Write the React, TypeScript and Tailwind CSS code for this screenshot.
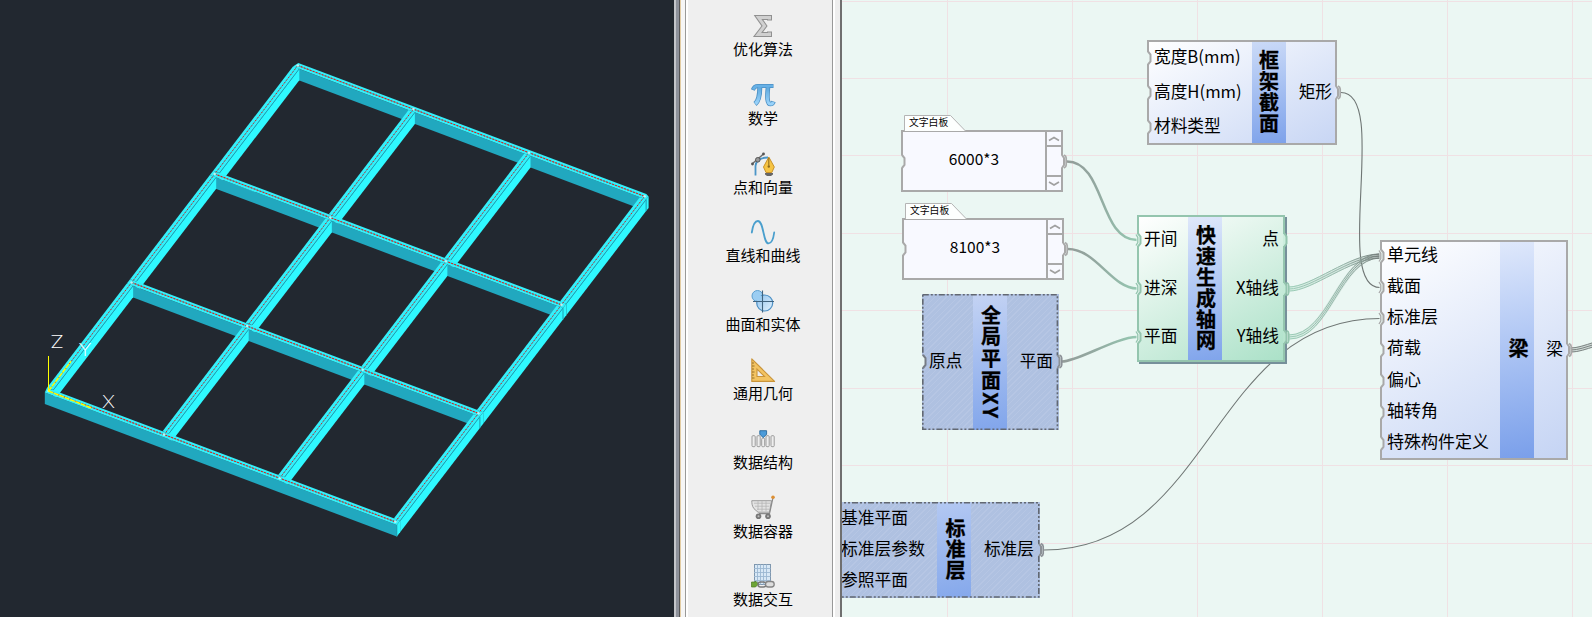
import React from "react";

type Pt = [number, number];

/* ---------- 3D viewport ---------- */

const node = (i: number, j: number, dy = 0): Pt => [
  48.5 + i * 115.6 + j * 83.1,
  391 - j * 108.5 + i * 43.6 + dy,
];
const poly = (pts: Pt[]) => pts.map((p) => p.map((n) => n.toFixed(1)).join(",")).join(" ");
const A = 0.027;
const B = 0.02;
const D = 11.5;

function Viewport() {
  const shapes: React.ReactNode[] = [];
  for (let j = 3; j >= 0; j--) {
    const l = -0.018;
    const r = 3 + A;
    const back = j === 3 ? 3 + B / 2 : j + B;
    const topLeft = j === 0 ? l : -A;
    shapes.push(
      <g key={"i" + j}>
        <polygon fill="#21a8bf" points={poly([node(l, j - B), node(r, j - B), node(r, j - B, D), node(l, j - B, D)])} />
        <polygon fill="#35f0fa" points={poly([node(j === 3 ? -0.01 : -A, j + B), node(3, j + B), node(r, back), node(r, j - B), node(topLeft, j - B)])} />
      </g>
    );
    for (let i = 0; i < 4; i++) {
      const lo = j - 1 + B;
      if (j > 0) {
        shapes.push(
          <g key={"j" + i + j}>
            <polygon fill="#2ff8ff" points={poly([node(i + A, j - B), node(i + A, lo), node(i + A, lo, D), node(i + A, j - B, D)])} />
            <polygon fill="#35f0fa" points={poly([node(i - A, j - B), node(i + A, j - B), node(i + A, lo), node(i - A, lo)])} />
            <polyline fill="none" stroke="#1f9fb2" strokeWidth="1" points={poly([node(i + A, j - B), node(i + A, lo)])} />
          </g>
        );
      }
      if (i === 3) {
        shapes.push(
          <g key={"e" + j}>
            <polygon fill="#2ff8ff" points={poly([node(3 + A, back), node(3 + A, j - B), node(3 + A, j - B, D), node(3 + A, back, D)])} />
            <polyline fill="none" stroke="#1f9fb2" strokeWidth="1" points={poly([node(3 + A, j - B), node(3 + A, j - B, D)])} />
          </g>
        );
      }
    }
  }
  return (
    <svg className="block h-[617px] w-[674px] shrink-0 bg-[#222830]" viewBox="0 0 674 617">
      {shapes}
      {[0, 1, 2, 3].map((k) => (
        <g key={k} fill="none">
          <polyline stroke="#27bccb" strokeWidth="1" points={poly([node(0, k), node(3, k)])} />
          <polyline stroke="#e81c14" strokeWidth="1.1" strokeDasharray="1.8 1.4" points={poly([node(0, k), node(3, k)])} />
          <polyline stroke="#27bccb" strokeWidth="1" points={poly([node(k, 0), node(k, 3)])} />
          <polyline stroke="#e81c14" strokeWidth="1" strokeDasharray="1.4 2" points={poly([node(k, 0), node(k, 3)])} />
        </g>
      ))}
      {[0, 1, 2, 3].flatMap((i) =>
        [0, 1, 2, 3].map((j) => {
          const [x, y] = node(i, j);
          return <circle key={`${i}${j}`} cx={x} cy={y} r="1.3" fill="#b8f4f4" />;
        })
      )}
      <g stroke="#ffff00" fill="none">
        <path d="M48.5 356V391" strokeWidth="1" shapeRendering="crispEdges" />
        <path d="M48.5 391L92 408.2" strokeWidth="1.5" strokeDasharray="5 .8" />
        <path d="M48.5 391L71 361.3" strokeWidth="1.5" strokeDasharray="5 .8" />
      </g>
      <g fill="#fff" fontFamily="Inter, sans-serif" fontWeight="200" fontSize="17" textAnchor="middle">
        <text x="57" y="347.5" textLength="14" lengthAdjust="spacingAndGlyphs">Z</text>
        <text x="85" y="355.5" textLength="13" lengthAdjust="spacingAndGlyphs">Y</text>
        <text x="108.5" y="408" textLength="13" lengthAdjust="spacingAndGlyphs">X</text>
      </g>
    </svg>
  );
}

/* ---------- Category sidebar ---------- */

const icons: Record<string, React.ReactNode> = {
  sigma: (
    <g fill="none" strokeLinejoin="miter">
      <path d="M18.5 6.5V3.5H7.5L13.5 12L7 20.5H18.5V17.5" stroke="#909090" strokeWidth="5" />
      <path d="M18.5 5.5V3.5H7.5L13.5 12L7 20.5H18.5V18.5" stroke="#d0d0d0" strokeWidth="3" />
    </g>
  ),
  pi: (
    <g fill="none" strokeLinejoin="round">
      <g stroke="#4a8fc4">
        <path d="M1.8 7C2.8 4 4.5 3 7 3H22.5" strokeWidth="4" />
        <path d="M8.8 4C8.8 12 8 18 4 21" strokeWidth="5" />
        <path d="M17 4C16 14 16 21 19.5 21C21 21 22 20 22.5 18.5" strokeWidth="4.6" />
      </g>
      <g stroke="url(#blue)">
        <path d="M8.8 4C8.8 12 8 18 4.3 20.7" strokeWidth="3.4" />
        <path d="M17 4C16 14 16 21 19.5 21C21 21 22 20 22.3 19" strokeWidth="3" />
      </g>
      <path d="M2.2 6.5C3 4 4.5 3 7 3H22" stroke="#67b1e6" strokeWidth="2.6" />
    </g>
  ),
  pen: (
    <g>
      <path d="M4.5 23.5V14C5 8 9 5.5 17 5.5" fill="none" stroke="#4b96c8" strokeWidth="1.8" />
      <path d="M1 12L13 1.5" stroke="#6d6d6d" strokeWidth="1.4" />
      <circle cx="1.5" cy="12" r="1.4" fill="#555" /><circle cx="12.5" cy="2" r="1.4" fill="#555" />
      <circle cx="6.8" cy="7.8" r="2.3" fill="#9a9a9a" stroke="#555" />
      <path d="M17.8 5L12.5 15L15 20.5H20.8L23.3 15Z" fill="#f6c443" stroke="#c8922a" strokeWidth="1" />
      <path d="M17.8 6V13.5" stroke="#8d6a1b" /><circle cx="17.8" cy="14.5" r="1.2" fill="#8d6a1b" />
      <path d="M14 21H22V22.5L20 24H16L14 22.5Z" fill="#666" />
    </g>
  ),
  wave: <path d="M.8 12.5C2 4.5 4 1 6.8 1C13 1 12 23.4 17.5 23.4C20.5 23.4 22.5 18 23.2 12.5" fill="none" stroke="#4a9fcd" strokeWidth="1.8" strokeLinecap="round" />,
  solid: (
    <g>
      <circle cx="6.5" cy="7" r="5.5" fill="#9bcdf2" stroke="#5c9fd0" />
      <circle cx="13.7" cy="14" r="8" fill="url(#pale)" stroke="#4d90c4" strokeWidth="1.2" />
      <path d="M5 3.5L12 8L8 13L3 10Z" fill="#9bcdf2" />
      <path d="M2 12.5H23M11.5 1.5V23.5" stroke="#40637f" strokeWidth="1.1" />
    </g>
  ),
  ruler: (
    <g>
      <path d="M.8.8V23.4H23.6Z" fill="#f3c463" stroke="#c9943a" strokeWidth="1.1" strokeLinejoin="round" />
      <path d="M6 11V18.5H13.5Z" fill="#efefef" stroke="#c9943a" strokeWidth="1.1" />
      <path d="M1 5H3M1 8H3.5M1 11H3M1 14H3.5M1 17H3M1 20H3.5" stroke="#8f6a25" strokeWidth=".9" />
    </g>
  ),
  array: (
    <g transform="translate(0 -.8)">
      {[1, 6, 15, 20].map((x) => (
        <rect key={x} x={x} y="9.5" width="3.2" height="11" rx="1" fill="#eee" stroke="#9b9b9b" />
      ))}
      <rect x="10.7" y="12" width="3" height="8.5" rx="1" fill="#eee" stroke="#9b9b9b" />
      <path d="M8.8 4.5H15.6V8L12.2 11.5L8.8 8Z" fill="#4b9bd9" stroke="#27699c" strokeWidth=".9" />
    </g>
  ),
  cart: (
    <g transform="translate(0 -.8)">
      <path d="M.8 5.5H20.5L18.5 17H7L3 13.5C1 11 .8 8 .8 5.5Z" fill="#e3e3e3" stroke="#9a9a9a" />
      <path d="M3 8H19M4 11H18.5M6 14H18M7 6V15M11 6V16M15 6V16" stroke="#b5b5b5" strokeWidth=".8" />
      <path d="M22 2.5L18.5 18.5H8" fill="none" stroke="#8a8a8a" strokeWidth="1.2" />
      <circle cx="22" cy="2" r="1.8" fill="#dc8f33" />
      <circle cx="7.5" cy="21" r="2.8" fill="#777" /><circle cx="17" cy="21" r="2.8" fill="#777" />
      <circle cx="7.5" cy="21" r="1" fill="#bbb" /><circle cx="17" cy="21" r="1" fill="#bbb" />
    </g>
  ),
  link: (
    <g transform="translate(0 -.5)">
      <rect x="3.5" y="1" width="16" height="20" fill="#d8e8f6" stroke="#7f97ae" />
      <path d="M6.5 1V21M9.5 1V21M12.5 1V21M15.5 1V21M3 5H19.5M3 9H19.5M3 13H19.5M3 17H19.5" stroke="#9cb8d3" strokeWidth=".9" />
      <path d="M.5 18.5H4.5V17.5L7.5 20.5L4.5 23.5H.5Z" fill="#6da536" stroke="#4c7a22" strokeWidth=".7" />
      <rect x="7" y="18.5" width="8" height="5" rx="2.5" fill="none" stroke="#7a7a7a" strokeWidth="1.5" />
      <rect x="14.5" y="18" width="8.7" height="5.5" rx="2.7" fill="#ddd" stroke="#858585" strokeWidth="1.3" />
    </g>
  ),
};

const categories: [string, string][] = [
  ["sigma", "优化算法"],
  ["pi", "数学"],
  ["pen", "点和向量"],
  ["wave", "直线和曲线"],
  ["solid", "曲面和实体"],
  ["ruler", "通用几何"],
  ["array", "数据结构"],
  ["cart", "数据容器"],
  ["link", "数据交互"],
];

function Sidebar() {
  return (
    <aside className="flex h-full shrink-0">
      <div className="w-[2px] bg-[#c4c6ca]" />
      <div className="w-[3px] bg-[#8e929b]" />
      <div className="w-px bg-[#565656]" />
      <div className="w-px bg-[#e3cda4]" />
      <div className="w-[4px] bg-[#f6f6f6]" />
      <div className="w-px bg-[#999]" />
      <div className="w-[2px] bg-white" />
      <nav className="flex w-[144px] flex-col items-center bg-[#efefef] pt-[14px] pl-[6px]">
        {categories.map(([icon, label]) => (
          <div key={label} className="flex h-[68.8px] shrink-0 flex-col items-center">
            <svg className="h-[24px] w-[24px] overflow-visible" viewBox="0 0 24 24">{icons[icon]}</svg>
            <span className="h-[22px] text-[15px] leading-[22px] whitespace-nowrap text-black">{label}</span>
          </div>
        ))}
      </nav>
      <div className="w-px bg-[#999]" />
      <div className="w-[2px] bg-white" />
      <div className="w-[5px] bg-[#eee]" />
      <div className="w-[2px] bg-[#6f6f6f]" />
    </aside>
  );
}

/* ---------- Node canvas ---------- */

function Title({ text, className, tracking = "tracking-[1px]" }: { text: string; className: string; tracking?: string }) {
  return (
    <div className={`flex w-[34px] shrink-0 items-center justify-center ${className}`}>
      <span className={`text-[20px] leading-[34px] font-bold [-webkit-text-stroke:0.3px_#000] [writing-mode:vertical-rl] ${tracking}`}>{text}</span>
    </div>
  );
}

function Labels({ items, className }: { items: string[]; className: string }) {
  return (
    <div className={`flex flex-col leading-none whitespace-nowrap ${className}`}>
      {items.map((t) => (
        <div key={t} className="flex flex-1 items-center">{t}</div>
      ))}
    </div>
  );
}

function Panel({ value, className }: { value: string; className: string }) {
  return (
    <div className={`absolute w-[162px] ${className}`}>
      <div className="relative ml-[3px] flex h-[15px] w-[62px] items-center pt-px pl-[5px]">
        <svg className="absolute inset-0" width="62" height="16" viewBox="0 0 62 16">
          <path d="M.5 16V.5H46.5L61.5 16" fill="#fdfffe" stroke="#b4b4b4" />
        </svg>
        <span className="relative text-[9.8px] leading-none">文字白板</span>
      </div>
      <div className="flex h-[62px] border-2 border-[#a9a9a9] bg-[#f8f9ff]">
        <div className="flex flex-1 items-center justify-center pb-[5px] text-[15.5px] leading-none">{value}</div>
        <div className="flex w-[16px] flex-col border-l-2 border-[#a9a9a9]">
          <svg className="h-[15px] w-full border-b-2 border-[#a9a9a9]" viewBox="0 0 14 13"><path d="M2 8.5L7 5.5L12 8.5" fill="none" stroke="#a0a0a0" strokeWidth="1.7" /></svg>
          <div className="flex-1" />
          <svg className="h-[15px] w-full border-t-2 border-[#a9a9a9]" viewBox="0 0 14 13"><path d="M2 5L7 8L12 5" fill="none" stroke="#a0a0a0" strokeWidth="1.7" /></svg>
        </div>
      </div>
    </div>
  );
}

function InPort({ x, y, wired, color = "#a9a9a9" }: { x: number; y: number; wired?: boolean; color?: string }) {
  return (
    <g>
      <path d={`M${x - 1.5} ${y - 6}H${x}L${x + 3} ${y - 3.5}V${y + 3.5}L${x} ${y + 6}H${x - 1.5}Z`} fill="#ebf7f3" />
      <path d={`M${x} ${y - 6.5}L${x + 2.5} ${y - 3.5}V${y + 3.5}L${x} ${y + 6.5}`} fill="none" stroke={color} strokeWidth="2" />
      {wired && <path d={`M${x - 2} ${y - 5.5}L${x - 0.2} ${y - 2.5}V${y + 2.5}L${x - 2} ${y + 5.5}`} fill="none" stroke={color} strokeWidth="1.3" />}
    </g>
  );
}

function OutPort({ x, y, wired = true, color = "#a9a9a9", fill = "#dfe8fa" }: { x: number; y: number; wired?: boolean; color?: string; fill?: string }) {
  return (
    <g>
      <path d={`M${x - 1.5} ${y - 6}H${x}L${x + 1.5} ${y - 3.5}V${y + 3.5}L${x} ${y + 6}H${x - 1.5}Z`} fill={fill} />
      <path d={`M${x} ${y - 6.5}L${x + 2} ${y - 3.5}V${y + 3.5}L${x} ${y + 6.5}`} fill="none" stroke={color} strokeWidth="2" />
      {wired && <path d={`M${x + 2} ${y - 6.5}Q${x + 4.2} ${y - 5.5} ${x + 4.2} ${y - 3.5}V${y + 3.5}Q${x + 4.2} ${y + 5.5} ${x + 2} ${y + 6.5}`} fill="none" stroke={color} strokeWidth="1.7" />}
    </g>
  );
}

const verticals = [947, 1072, 1197, 1322, 1447, 1572];
const horizontals = [1, 78, 155, 233, 310, 388, 465, 543];

function Triple({ d, stroke }: { d: string; stroke: string }) {
  return (
    <g fill="none" stroke={stroke} strokeWidth="1">
      <path d={d} strokeWidth="5" strokeOpacity=".25" />
      <path d={d} />
      <path d={d} transform="translate(-.4 -2)" />
      <path d={d} transform="translate(.4 2)" />
    </g>
  );
}

function Canvas() {
  return (
    <main className="relative h-full flex-1 overflow-hidden bg-[#ebf7f3]">
      <svg className="absolute inset-0" width="750" height="617" viewBox="842 0 750 617">
        <g fill="#f0e1e4">
          {verticals.map((x) => <rect key={x} x={x} y="0" width="1" height="617" />)}
          {horizontals.map((y) => <rect key={y} x="842" y={y} width="750" height="1" />)}
        </g>
        <g fill="none" strokeWidth="2.5">
          <path d="M1067 161.5C1105 161.5 1099 240 1137 240" stroke="url(#w1)" />
          <path d="M1068 249C1096 249 1112 288.5 1137 288.5" stroke="url(#w1)" />
          <path d="M1062 361.5C1078 361.5 1116 337 1137 337" stroke="url(#w1)" />
        </g>
        <g fill="none" stroke="#6f7674" strokeWidth="1.1">
          <path d="M1341 92.5C1390 92.5 1332 287.5 1380 287.5" />
          <path d="M1044 550C1212 550 1212 318.5 1380 318.5" />
        </g>
        <Triple d="M1289 289C1312 289 1350 256 1380 256" stroke="url(#w2)" />
        <Triple d="M1289 337C1330 337 1339 256 1380 256" stroke="url(#w2)" />
        <Triple d="M1571 350C1578 350 1586 347 1594 344.5" stroke="#7d8583" />
      </svg>

      <Panel value="6000*3" className="top-[115px] left-[59px]" />
      <Panel value="8100*3" className="top-[203px] left-[60px]" />

      <section className="absolute top-[40px] left-[305px] flex h-[105px] w-[190px] border-2 border-[#a9a9a9] bg-linear-150 from-white to-[#c8d6f4]">
        <Labels items={["宽度B(mm)", "高度H(mm)", "材料类型"]} className="-mt-[3px] w-[103px] pl-[5px] text-[16.7px]" />
        <Title text="框架截面" className="bg-linear-170 from-[#cbdaf7] to-[#7ea2ea] pr-px pb-[2px]" />
        <Labels items={["矩形"]} className="flex-1 items-end pr-[3px] pb-[3px] text-[16.7px]" />
      </section>

      <section className="absolute top-[215px] left-[295px] flex h-[147px] w-[148px] border-2 border-[#94c5ae] bg-linear-150 from-white to-[#abe1c8] shadow-[2px_2px_0_#76909a]">
        <Labels items={["开间", "进深", "平面"]} className="-mt-[3px] w-[49px] pl-[5px] text-[16.7px]" />
        <Title text="快速生成轴网" className="bg-linear-170 from-[#dfe8fa] to-[#80a4eb] pb-[2px] pl-px" />
        <div className="-mt-[3px] flex flex-1 flex-col items-end pr-[4px] text-[16.7px] leading-none">
          {["点", "X轴线", "Y轴线"].map((t) => <div key={t} className="flex flex-1 items-center">{t}</div>)}
        </div>
      </section>

      <section className="absolute top-[240px] left-[538px] flex h-[220px] w-[188px] border-2 border-[#a9a9a9] bg-linear-150 from-white to-[#c5d4f4]">
        <Labels items={["单元线", "截面", "标准层", "荷载", "偏心", "轴转角", "特殊构件定义"]} className="-mt-[4px] w-[118px] pb-[2px] pl-[5px] text-[17px]" />
        <Title text="梁" className="bg-linear-170 from-[#dfe8fb] to-[#7a9fea] pb-[3px] pl-[2px]" />
        <Labels items={["梁"]} className="flex-1 items-end pr-[3px] pb-[3px] text-[16.7px]" />
      </section>

      <section className="absolute top-[294px] left-[80px] flex h-[136px] w-[137px] bg-[#afc1e1] bg-[repeating-linear-gradient(135deg,transparent_0_3px,#b6c6e4_3px_4px)] px-[2px]">
        <Labels items={["原点"]} className="w-[49px] pb-[3px] pl-[5px] text-[16.7px]" />
        <Title text="全局平面XY" tracking="tracking-[1.8px]" className="bg-linear-170 from-[#c4d3f3] to-[#81a5eb] pl-px" />
        <Labels items={["平面"]} className="flex-1 items-end pr-[4px] pb-[3px] text-[16.7px]" />
      </section>

      <section className="absolute top-[502px] left-[-22px] flex h-[96px] w-[220px] bg-[#afc1e1] bg-[repeating-linear-gradient(135deg,transparent_0_3px,#b6c6e4_3px_4px)] pt-px pr-[2px] pb-px">
        <Labels items={["基准平面", "标准层参数", "参照平面"]} className="-mt-px w-[117px] pb-[2px] pl-[21px] text-[16.8px]" />
        <Title text="标准层" className="bg-linear-170 from-[#b3c8f2] to-[#85a8eb] pb-px pl-[2px]" />
        <Labels items={["标准层"]} className="flex-1 items-end pr-[4px] pb-[4px] text-[16.7px]" />
      </section>

      <svg className="absolute inset-0" width="750" height="617" viewBox="842 0 750 617">
        <defs>
          <linearGradient id="w1" x1="0" x2="1"><stop stopColor="#939c99" /><stop offset=".4" stopColor="#93a8a0" /><stop offset="1" stopColor="#95c8b1" /></linearGradient>
          <linearGradient id="w2" x1="0" x2="1"><stop stopColor="#9acdb6" /><stop offset=".6" stopColor="#96b5a9" /><stop offset="1" stopColor="#747c7a" /></linearGradient>
        </defs>
        <g fill="none" stroke="#626872" strokeWidth="1.6" strokeDasharray="6 2 2 2 2 2">
          <rect x="922.8" y="294.8" width="134.6" height="134.4" />
          <rect x="820" y="502.8" width="218.8" height="94.2" />
        </g>
        <InPort x={902} y={161.5} />
        <InPort x={903} y={249} />
        <OutPort x={1062} y={161.5} fill="#f8f9ff" />
        <OutPort x={1063} y={249} fill="#f8f9ff" />
        {[58, 92.5, 127].map((y) => <InPort key={y} x={1148} y={y} />)}
        <OutPort x={1336} y={92.5} />
        {[240, 288.5, 337].map((y) => <InPort key={y} x={1138} y={y} wired color="#94c5ae" />)}
        <OutPort x={1284.5} y={240} wired={false} color="#94c5ae" fill="#cdeede" />
        <OutPort x={1284.5} y={289} color="#94c5ae" fill="#c4ead8" />
        <OutPort x={1284.5} y={337} color="#94c5ae" fill="#b8e5cf" />
        {[256, 287.5, 318.5, 350, 381, 412.5, 443.5].map((y, i) => <InPort key={y} x={1381} y={y} wired={i < 3} />)}
        <OutPort x={1567} y={350} />
        <InPort x={923} y={361.5} color="#777c84" />
        <OutPort x={1057.5} y={361.5} color="#8b9096" fill="#afc1e1" />
        <OutPort x={1039} y={550} color="#8b9096" fill="#afc1e1" />
      </svg>
    </main>
  );
}

export default function App() {
  return (
    <div className="flex h-[617px] w-[1592px] overflow-hidden bg-[#efefef] font-['Noto_Sans_CJK_SC',sans-serif] text-black">
      <svg className="absolute h-0 w-0">
        <defs>
          <linearGradient id="blue" x2="0" y2="1"><stop stopColor="#5da8dd" /><stop offset="1" stopColor="#9ad3fa" /></linearGradient>
          <linearGradient id="pale" x2="1" y2="1"><stop stopColor="#8fc3ee" /><stop offset="1" stopColor="#e3f2fd" /></linearGradient>
        </defs>
      </svg>
      <Viewport />
      <Sidebar />
      <Canvas />
    </div>
  );
}
